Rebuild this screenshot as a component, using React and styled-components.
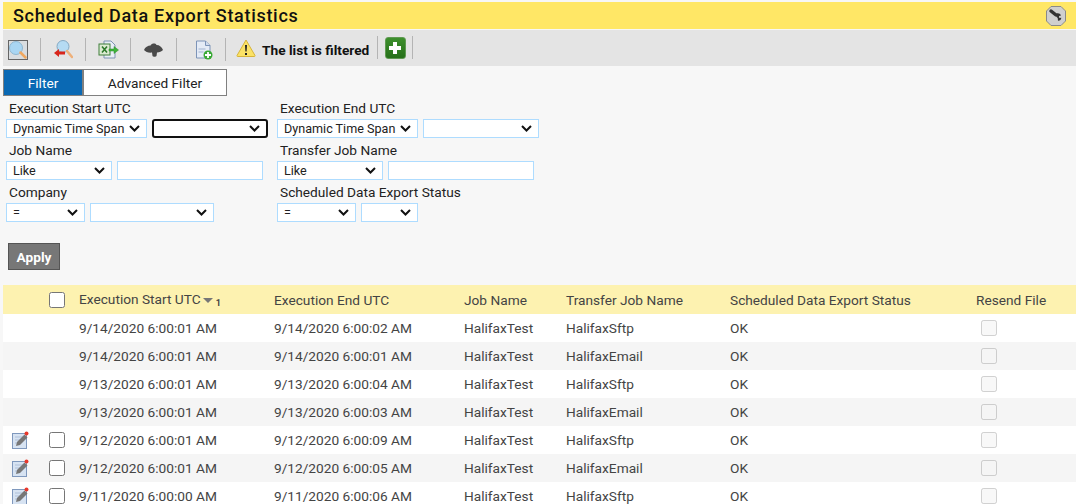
import React from 'react'
import styled, { createGlobalStyle } from 'styled-components'

const GlobalStyle = createGlobalStyle`
html, body {
  margin: 0;
  height: 504px;
  overflow: hidden;
  background: #f7f7f7;
  font-family: Roboto, "Liberation Sans", sans-serif;
  font-size: 13.7px;
  color: #222;
}`

const chevron = "data:image/svg+xml,%3Csvg xmlns='http://www.w3.org/2000/svg' width='11' height='7' viewBox='0 0 11 7'%3E%3Cpath d='M1 1l4.500 4.500L10 1' fill='none' stroke='%23111' stroke-width='2'/%3E%3C/svg%3E"

const Page = styled.div`
padding: 2px 0 0 3px;`

const TitleBar = styled.header`
height: 27px;
background: #ffe766;
display: flex;
align-items: center;
justify-content: space-between;
padding: 0 10px 0 10px;`

const Title = styled.h1`
margin: 0;
font-size: 18px;
font-weight: 500;
letter-spacing: 0.7px;
color: #111;`

const Toolbar = styled.div`
margin-top: 1px;
height: 36px;
background: #e4e4e4;
display: flex;
align-items: flex-start;`

const Tool = styled.div`
width: ${props => props.$w}px;
height: 23px;
margin-top: ${props => props.$raised ? 6 : 8}px;
border-right: 1px solid #b4b4b4;
display: flex;
align-items: center;
justify-content: ${props => props.$start ? "flex-start" : "center"};
padding-left: ${props => props.$pad || 0}px;
padding-top: ${props => props.$padTop || 0}px;
box-sizing: border-box;
gap: 6px;`

const WarningSlot = styled.span`
display: flex;
margin-top: -3px;`

const FilteredText = styled.span`
font-weight: 700;
color: #111;
white-space: nowrap;`

const AddButton = styled.div`
width: 21px;
height: 22px;
border-radius: 3px;
background: linear-gradient(#3d8f2c, #26701a);
border: 1px solid #5f9a52;
box-sizing: border-box;
display: flex;
align-items: center;
justify-content: center;`

const Tabs = styled.div`
display: flex;
margin-top: 3px;`

const Tab = styled.div`
height: 27px;
box-sizing: border-box;
width: ${props => props.$active ? 80 : 144}px;
background: ${props => props.$active ? "#0a69b4" : "#fff"};
color: ${props => props.$active ? "#fff" : "#222"};
border: 1px solid #808080;
display: flex;
align-items: center;
justify-content: center;`

const FilterGrid = styled.div`
display: grid;
grid-template-columns: 271px 271px;
padding: 0 0 0 3px;`

const Field = styled.div`
height: 42px;`

const FieldLabel = styled.div`
height: 23px;
line-height: 25px;
padding-left: 3px;
color: #222;`

const Controls = styled.div`
display: flex;
gap: 5px;`

const Select = styled.select`
appearance: none;
width: ${props => props.$w}px;
height: 19px;
box-sizing: border-box;
background: #fff url("${chevron}") no-repeat right 6px center;
border: ${props => props.$focus ? "2px solid #111" : "1px solid #aedcff"};
border-radius: ${props => props.$focus ? "3px" : "0"};
font-family: Roboto, "Liberation Sans", sans-serif;
font-size: 12.6px;
color: #222;
padding: 0 0 0 6px;
outline: none;`

const TextInput = styled.input`
width: ${props => props.$w}px;
height: 19px;
box-sizing: border-box;
background: #fff;
border: 1px solid #aedcff;
padding: 0 2px;`

const ApplyButton = styled.button`
display: block;
margin: 21px 0 15px 5px;
width: 52px;
height: 27px;
background: #777;
border: 1px solid #555;
color: #fff;
font-family: Roboto, "Liberation Sans", sans-serif;
font-weight: 700;
font-size: 13.7px;
padding: 0;`

const Row = styled.div`
display: grid;
grid-template-columns: 46px 30px 195px 190px 102px 164px 246px 1fr;
align-items: center;
height: ${props => props.$head ? 29 : 28}px;
background: ${props => props.$head ? "#fdf2b0" : props.$odd ? "#f5f5f5" : "#fff"};
color: #444;`

const EditCell = styled.div`
padding-left: 9px;
display: flex;
align-items: center;`

const Check = styled.input`
width: 16px;
height: 16px;
margin: 0;
display: block;`

const SortMark = styled.span`
display: inline-block;
width: 0;
height: 0;
margin: 0 3px 0 2px;
border-left: 5px solid transparent;
border-right: 5px solid transparent;
border-top: 5px solid #777;
vertical-align: 1px;`

const SortIndex = styled.span`
font-size: 9px;
font-weight: 700;
vertical-align: -2px;`

const ResendCell = styled.div`
padding-left: 5px;`

const ZoomIcon = () => (
    <svg width="20" height="20" viewBox="0 0 20 20">
        <rect x=".5" y=".5" width="19" height="19" fill="#d9dde0" stroke="#666" />
        <circle cx="8" cy="8" r="6.500" fill="#a9d6f3" stroke="#8fb6d0" />
        <path d="M12.500 12.500l5 5" stroke="#f0a860" strokeWidth="2.500" strokeLinecap="round" />
    </svg>
)

const ZoomBackIcon = () => (
    <svg width="19" height="19" viewBox="0 0 19 19">
        <circle cx="9" cy="6.500" r="6" fill="#b5dbf3" stroke="#86a9c2" />
        <path d="M13 11l5 6" stroke="#eeb07a" strokeWidth="2.500" strokeLinecap="round" />
        <path d="M0 13l5-4v2.500h6v3H5V17z" fill="#d8261c" />
    </svg>
)

const ExcelIcon = () => (
    <svg width="21" height="20" viewBox="0 0 21 20">
        <path d="M6 1h7l4 4v13H6z" fill="#e8eef6" stroke="#7f93b2" />
        <rect x="1" y="4" width="11" height="11" fill="#dcebd2" stroke="#3f7f3a" />
        <path d="M4 6.500l5 6M9 6.500l-5 6" stroke="#2f7a2d" strokeWidth="1.600" />
        <path d="M11 9h5V6.500l4.500 3.500-4.500 3.500V11h-5z" fill="#3fb53a" stroke="#2b8a2b" strokeWidth=".5" />
    </svg>
)

const GrayArrowIcon = () => (
    <svg width="19" height="14" viewBox="0 0 19 14">
        <path d="M0 7C1 4 4 2.500 6.500 2.500 8 0 11.500 0 12.500 2c3 0 5.500 2 6.500 5-1.500 1.500-3.500 2.500-6 2.500l-.5 3.500c-.5 1-3.500 1-4 0L8 9.500C5 10 1.500 9 0 7z" fill="#4a4a4a" />
    </svg>
)

const NewDocIcon = () => (
    <svg width="18" height="20" viewBox="0 0 18 20">
        <path d="M1.500 1h9l4.500 4.500V18h-13.500z" fill="#e4ebf6" stroke="#7d94b8" />
        <path d="M10.500 1v4.500H15" fill="#cfdbee" stroke="#7d94b8" />
        <path d="M3.500 9h7M3.500 12h5" stroke="#a0b3d0" />
        <circle cx="13" cy="15" r="4.500" fill="#39a935" />
        <path d="M13 12v6M10 15h6" stroke="#fff" strokeWidth="1.800" />
    </svg>
)

const WarningIcon = () => (
    <svg width="20" height="18" viewBox="0 0 20 18">
        <path d="M10 1l9 15.500c.2.500 0 1-.5 1h-17c-.5 0-.7-.5-.5-1z" fill="#fbe266" stroke="#d6b43a" />
        <path d="M9 6h2l-.4 6.500h-1.200zM9 14h2v2H9z" fill="#222" />
    </svg>
)

const PlusIcon = () => (
    <svg width="14" height="14" viewBox="0 0 14 14">
        <path d="M5 1h4v4h4v4H9v4H5V9H1V5h4z" fill="#fff" />
    </svg>
)

const WrenchBadge = () => (
    <svg width="20" height="20" viewBox="0 0 20 20">
        <path d="M5 .5h10L19.500 5v10L15 19.500H5L.5 15V5z" fill="#cfcfcf" stroke="#8a8a8a" />
        <path d="M5 5l5 4" stroke="#333" strokeWidth="3.500" strokeLinecap="round" />
        <path d="M10.500 7.500c1.800-.6 3.800 0 4.500 2l-2 .5.300 2 2-.3c0 2-1.800 3.300-3.300 3l-.3-2.700c-1.300-.5-2-2.500-1.200-4.500z" fill="#333" />
    </svg>
)

const EditIcon = () => (
    <svg width="17" height="18" viewBox="0 0 17 18">
        <rect x=".5" y="2.500" width="14" height="15" fill="#d7e3f2" stroke="#7f98bd" />
        <path d="M3 6h9M3 9h6M3 12h5" stroke="#aebfd8" />
        <path d="M4 15l1-4 7.500-7.500 3 3L8 14z" fill="#777" />
        <circle cx="14.500" cy="2.500" r="2" fill="#e8392c" />
    </svg>
)

const rows = [
    ["9/14/2020 6:00:01 AM", "9/14/2020 6:00:02 AM", "HalifaxSftp", false],
    ["9/14/2020 6:00:01 AM", "9/14/2020 6:00:01 AM", "HalifaxEmail", false],
    ["9/13/2020 6:00:01 AM", "9/13/2020 6:00:04 AM", "HalifaxSftp", false],
    ["9/13/2020 6:00:01 AM", "9/13/2020 6:00:03 AM", "HalifaxEmail", false],
    ["9/12/2020 6:00:01 AM", "9/12/2020 6:00:09 AM", "HalifaxSftp", true],
    ["9/12/2020 6:00:01 AM", "9/12/2020 6:00:05 AM", "HalifaxEmail", true],
    ["9/11/2020 6:00:00 AM", "9/11/2020 6:00:06 AM", "HalifaxSftp", true],
]

const App = () => {
    return (
        <Page>
            <GlobalStyle />
            <TitleBar>
                <Title>Scheduled Data Export Statistics</Title>
                <WrenchBadge />
            </TitleBar>
            <Toolbar>
                <Tool $w={38} $start $pad={5}><ZoomIcon /></Tool>
                <Tool $w={45}><ZoomBackIcon /></Tool>
                <Tool $w={45}><ExcelIcon /></Tool>
                <Tool $w={46}><GrayArrowIcon /></Tool>
                <Tool $w={49} $pad={5}><NewDocIcon /></Tool>
                <Tool $w={152} $start $pad={10} $padTop={4} $raised>
                    <WarningSlot><WarningIcon /></WarningSlot>
                    <FilteredText>The list is filtered</FilteredText>
                </Tool>
                <Tool $w={35} $raised><AddButton><PlusIcon /></AddButton></Tool>
            </Toolbar>
            <Tabs>
                <Tab $active>Filter</Tab>
                <Tab>Advanced Filter</Tab>
            </Tabs>
            <FilterGrid>
                <Field>
                    <FieldLabel>Execution Start UTC</FieldLabel>
                    <Controls>
                        <Select $w={141}><option>Dynamic Time Span</option></Select>
                        <Select $w={116} $focus><option></option></Select>
                    </Controls>
                </Field>
                <Field>
                    <FieldLabel>Execution End UTC</FieldLabel>
                    <Controls>
                        <Select $w={141}><option>Dynamic Time Span</option></Select>
                        <Select $w={116}><option></option></Select>
                    </Controls>
                </Field>
                <Field>
                    <FieldLabel>Job Name</FieldLabel>
                    <Controls>
                        <Select $w={106}><option>Like</option></Select>
                        <TextInput $w={146} />
                    </Controls>
                </Field>
                <Field>
                    <FieldLabel>Transfer Job Name</FieldLabel>
                    <Controls>
                        <Select $w={106}><option>Like</option></Select>
                        <TextInput $w={146} />
                    </Controls>
                </Field>
                <Field>
                    <FieldLabel>Company</FieldLabel>
                    <Controls>
                        <Select $w={79}><option>=</option></Select>
                        <Select $w={124}><option></option></Select>
                    </Controls>
                </Field>
                <Field>
                    <FieldLabel>Scheduled Data Export Status</FieldLabel>
                    <Controls>
                        <Select $w={79}><option>=</option></Select>
                        <Select $w={57}><option></option></Select>
                    </Controls>
                </Field>
            </FilterGrid>
            <ApplyButton>Apply</ApplyButton>
            <Row $head>
                <div></div>
                <Check type="checkbox" />
                <div>Execution Start UTC<SortMark /><SortIndex>1</SortIndex></div>
                <div>Execution End UTC</div>
                <div>Job Name</div>
                <div>Transfer Job Name</div>
                <div>Scheduled Data Export Status</div>
                <div>Resend File</div>
            </Row>
            {rows.map((row, idx) =>
                <Row key={idx} $odd={idx % 2 == 1}>
                    <EditCell>{row[3] && <EditIcon />}</EditCell>
                    <div>{row[3] && <Check type="checkbox" />}</div>
                    <div>{row[0]}</div>
                    <div>{row[1]}</div>
                    <div>HalifaxTest</div>
                    <div>{row[2]}</div>
                    <div>OK</div>
                    <ResendCell><Check type="checkbox" disabled /></ResendCell>
                </Row>
            )}
        </Page>
    )
}

export default App
